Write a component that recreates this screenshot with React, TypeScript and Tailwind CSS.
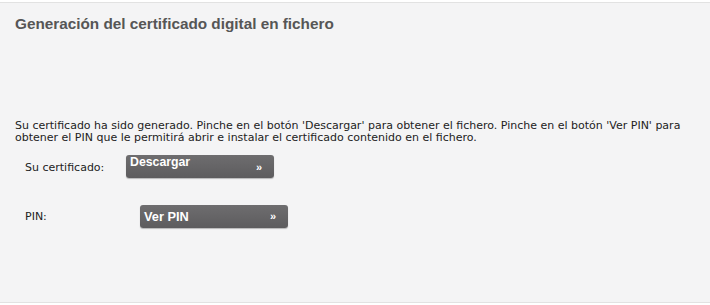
export default function App() {
  return (
    <div className="h-[305px] w-[710px] bg-white pt-[2px]">
      <div className="flex h-[301px] flex-col border-y border-[#e2e2e2] bg-[#f4f4f5] px-[15px]">
        {/* Title */}
        <h1 className="mt-[12px] font-['Liberation_Sans',Arial,sans-serif] text-[15.3px] leading-[18px] font-bold text-[#565656]">
          Generación del certificado digital en fichero
        </h1>

        {/* Message */}
        <p className="mt-[87px] font-['DejaVu_Sans',Verdana,sans-serif] text-[11px] leading-[12px] text-[#222]">
          Su certificado ha sido generado. Pinche en el botón 'Descargar' para obtener el fichero. Pinche en el botón 'Ver PIN' para obtener el PIN que le permitirá abrir e instalar el certificado contenido en el fichero.
        </p>

        {/* Download row */}
        <div className="mt-[11px] flex items-center font-['DejaVu_Sans',Verdana,sans-serif] text-[11px] text-[#222]">
          <span className="ml-[10px] w-[101px] pt-[3px]">Su certificado:</span>
          <button className="relative h-[23px] w-[148px] rounded-[3px] bg-gradient-to-b from-[#6e6d6f] to-[#5d5c5e] text-left shadow-[0_1px_1px_rgba(0,0,0,0.25)]">
            <span className="absolute left-[4px] top-[-2px] font-['Liberation_Sans',Arial,sans-serif] text-[12.3px] font-bold text-white">
              Descargar
            </span>
            <span className="absolute right-[12px] top-[4px] font-['Liberation_Sans',Arial,sans-serif] text-[11px] font-bold text-white">
              »
            </span>
          </button>
        </div>

        {/* PIN row */}
        <div className="mt-[27px] flex items-center font-['DejaVu_Sans',Verdana,sans-serif] text-[11px] text-[#222]">
          <span className="ml-[10px] w-[115px] pt-[1px]">PIN:</span>
          <button className="relative h-[23px] w-[148px] rounded-[3px] bg-gradient-to-b from-[#6e6d6f] to-[#5d5c5e] text-left shadow-[0_1px_1px_rgba(0,0,0,0.25)]">
            <span className="absolute left-[4px] top-[2px] font-['Liberation_Sans',Arial,sans-serif] text-[12.8px] font-bold text-white">
              Ver PIN
            </span>
            <span className="absolute right-[12px] top-[3px] font-['Liberation_Sans',Arial,sans-serif] text-[11px] font-bold text-white">
              »
            </span>
          </button>
        </div>
      </div>
    </div>
  );
}
